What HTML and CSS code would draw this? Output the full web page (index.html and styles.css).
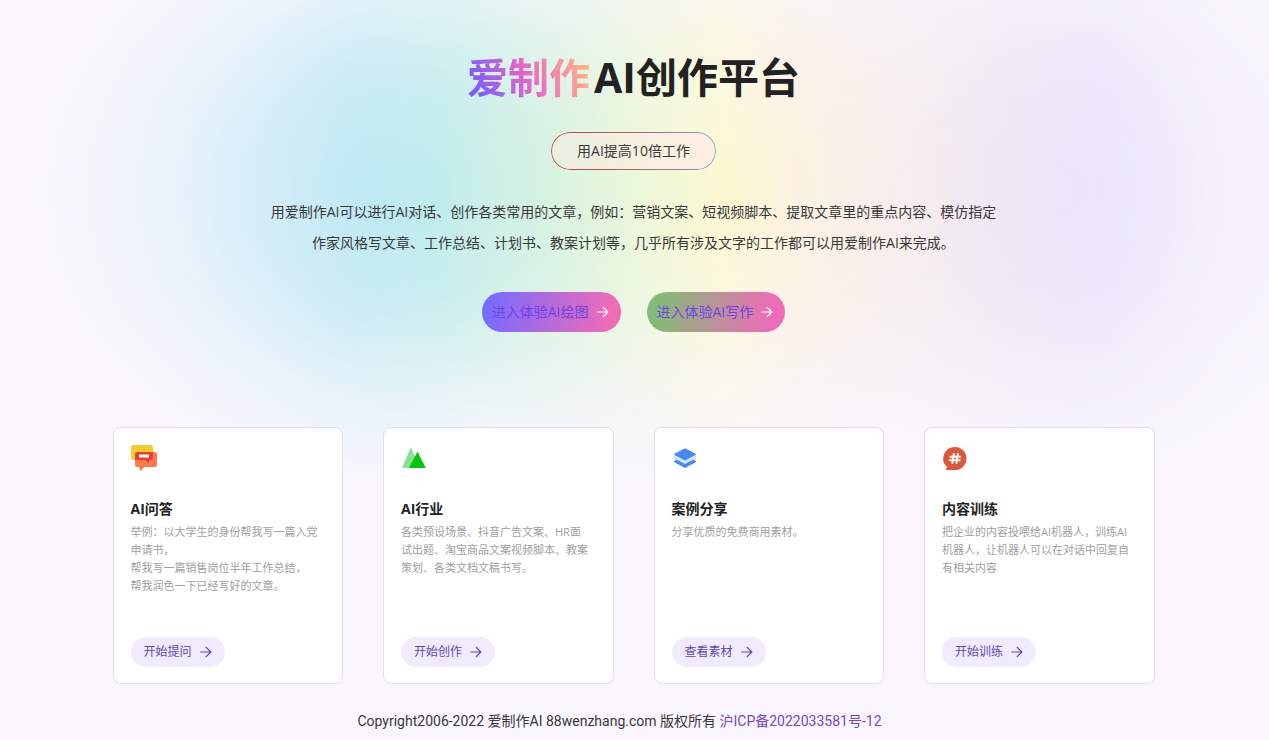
FILE: index.html
```html
<!DOCTYPE html>
<html lang="zh-CN">
<head>
<meta charset="utf-8">
<meta name="viewport" content="width=device-width, initial-scale=1">
<title>爱制作AI创作平台</title>
<link rel="stylesheet" href="styles.css">
</head>
<body>
<svg width="0" height="0" class="defs" aria-hidden="true">
  <symbol id="arrow" viewBox="0 0 12 12"><path d="M.8 6h10M6.200 1.300 10.800 6l-4.600 4.700" fill="none" stroke="currentColor" stroke-width="1.200" stroke-linecap="round" stroke-linejoin="round"/></symbol>
</svg>
<div class="page">
  <header class="hero">
    <h1 class="title"><span class="brand">爱制作</span><span>AI创作平台</span></h1>
    <p class="slogan">用AI提高10倍工作</p>
    <p class="intro">用爱制作AI可以进行AI对话、创作各类常用的文章，例如：营销文案、短视频脚本、提取文章里的重点内容、模仿指定<br>作家风格写文章、工作总结、计划书、教案计划等，几乎所有涉及文字的工作都可以用爱制作AI来完成。</p>
    <nav class="actions">
      <a class="action action-draw" href="#draw">进入体验AI绘图<svg class="arrow"><use href="#arrow"/></svg></a>
      <a class="action action-write" href="#write">进入体验AI写作<svg class="arrow"><use href="#arrow"/></svg></a>
    </nav>
  </header>

  <main class="cards">
    <section class="card">
      <svg class="icon" viewBox="0 0 28 28" aria-hidden="true">
        <rect x="0" y="1" width="22" height="15" rx="2.500" fill="#f3cb2c"/>
        <path d="M6.500 8h17A2.500 2.500 0 0 1 26 10.500v10a2.500 2.500 0 0 1-2.500 2.500H13.500L9 27.200 8.300 23H6.500A2.500 2.500 0 0 1 4 20.500v-10A2.500 2.500 0 0 1 6.500 8z" fill="#fa7a4e"/>
        <path d="M6.500 8H22v5.500a2.500 2.500 0 0 1-2.500 2.500H18v3.200L14 16H4v-5.500A2.500 2.500 0 0 1 6.500 8z" fill="#e5402f"/>
        <rect x="8" y="10.500" width="10" height="3" rx=".5" fill="#fff"/>
      </svg>
      <h2 class="card-title">AI问答</h2>
      <p class="card-text">举例：以大学生的身份帮我写一篇入党<br>申请书，<br>帮我写一篇销售岗位半年工作总结，<br>帮我润色一下已经写好的文章。</p>
      <a class="more" href="#ask">开始提问<svg class="arrow"><use href="#arrow"/></svg></a>
    </section>
    <section class="card">
      <svg class="icon" viewBox="0 0 28 28" aria-hidden="true">
        <path d="M1 24 9.800 3.200 16 17.500 13 24z" fill="#86e28e"/>
        <path d="M8 24 16.500 7.500 24.800 24z" fill="#06c60c"/>
      </svg>
      <h2 class="card-title">AI行业</h2>
      <p class="card-text">各类预设场景、抖音广告文案、HR面<br>试出题、淘宝商品文案视频脚本、教案<br>策划、各类文档文稿书写。</p>
      <a class="more" href="#create">开始创作<svg class="arrow"><use href="#arrow"/></svg></a>
    </section>
    <section class="card">
      <svg class="icon" viewBox="0 0 28 28" aria-hidden="true">
        <path d="M2 10.500v7l11 5.500 11-5.500v-7z" fill="#d6e6fd"/>
        <path d="M13 4.800 23.600 10.300 13 16 2.400 10.300z" fill="#4687f4" stroke="#4687f4" stroke-linejoin="round"/>
        <path d="M2.200 17.600 4.800 16.300 13 20.400 21.200 16.300 23.800 17.600 13 23.500z" fill="#4687f4" stroke="#4687f4" stroke-linejoin="round"/>
      </svg>
      <h2 class="card-title">案例分享</h2>
      <p class="card-text">分享优质的免费商用素材。</p>
      <a class="more" href="#cases">查看素材<svg class="arrow"><use href="#arrow"/></svg></a>
    </section>
    <section class="card">
      <svg class="icon" viewBox="0 0 28 28" aria-hidden="true">
        <path d="M13 3a11.500 11.500 0 1 1 0 23H3.500c.9-1 1.300-2 1.300-3.200A11.500 11.500 0 0 1 13 3z" fill="#db5a3c"/>
        <path d="M11.800 10 10.400 19M15.800 10l-1.400 9M8.300 12.800h9.800M7.900 16.300h9.800" fill="none" stroke="#fff" stroke-width="1.900" stroke-linecap="round"/>
      </svg>
      <h2 class="card-title">内容训练</h2>
      <p class="card-text">把企业的内容投喂给AI机器人，训练AI<br>机器人，让机器人可以在对话中回复自<br>有相关内容</p>
      <a class="more" href="#train">开始训练<svg class="arrow"><use href="#arrow"/></svg></a>
    </section>
  </main>

  <footer class="footer">Copyright2006-2022 爱制作AI 88wenzhang.com 版权所有 <a href="#icp">沪ICP备2022033581号-12</a></footer>
</div>
</body>
</html>
```
FILE: styles.css
```css
* {
  box-sizing: border-box;
}

body {
  margin: 0;
  background: #f9f7fd;
  color: #383838;
  font: 14px/20px "Open Sans", "Noto Sans CJK SC", sans-serif;
}

h1, h2, p {
  margin: 0;
}

a {
  color: #7a45c8;
  text-decoration: none;
}

.defs {
  position: absolute;
}

.page {
  position: relative;
  isolation: isolate;
  padding: 49px 22px 8px 20px;
}

/* Soft colour wash behind the hero */
.page::before {
  content: "";
  position: absolute;
  z-index: -1;
  inset: 0 0 auto;
  height: 500px;
  background: linear-gradient(90deg, #dceefb 8%, #cdebf8 20%, #bfe9f4 28%, #c0ecec 35%, #d2f2de 43%, #ecf7d6 51%, #fdf8d3 57%, #fdf0dc 63%, #f5eae9 72%, #ebe4f5 80%, #e8e2fa 87%, #efeafc 96%);
  -webkit-mask-image:
    radial-gradient(28% 290px at 31% 190px, #000 12%, #000000cc 40%, #00000050 72%, transparent),
    radial-gradient(26% 310px at 56% 190px, #000 10%, #000000a0 45%, #00000038 75%, transparent),
    radial-gradient(24% 290px at 83% 190px, #000000e6 5%, #000000bb 40%, #00000050 72%, transparent);
  mask-image:
    radial-gradient(28% 290px at 31% 190px, #000 12%, #000000cc 40%, #00000050 72%, transparent),
    radial-gradient(26% 310px at 56% 190px, #000 10%, #000000a0 45%, #00000038 75%, transparent),
    radial-gradient(24% 290px at 83% 190px, #000000e6 5%, #000000bb 40%, #00000050 72%, transparent);
}

.hero {
  display: flex;
  flex-direction: column;
  align-items: center;
  text-align: center;
}

.title {
  display: flex;
  gap: 4px;
  color: #222;
  font-size: 41px;
  line-height: 56px;
}

.brand {
  background: linear-gradient(65deg, #7b5cff 10%, #e668c4 50%, #ffb08a 90%);
  -webkit-background-clip: text;
  background-clip: text;
  color: transparent;
}

.slogan {
  position: relative;
  margin-top: 27px;
  padding: 9px 26px;
  border-radius: 20px;
  background: linear-gradient(90deg, #fdebe060, #fdebe4cc);
}

.slogan::before {
  content: "";
  position: absolute;
  inset: 0;
  padding: 1px;
  border-radius: 20px;
  background: linear-gradient(90deg, #cc4048, #b06070 50%, #7f9fd8);
  -webkit-mask: linear-gradient(#000 0 0) content-box exclude, linear-gradient(#000 0 0);
  mask: linear-gradient(#000 0 0) content-box exclude, linear-gradient(#000 0 0);
}

.intro {
  margin-top: 26px;
  line-height: 31px;
}

.actions {
  display: flex;
  gap: 26px;
  margin-top: 34px;
}

.action {
  display: flex;
  align-items: center;
  gap: 8px;
  padding: 10px;
  padding-right: 12px;
  border-radius: 20px;
  color: #7044e4;
}

.action-draw {
  background: linear-gradient(100deg, #776bff 5%, #ee6bb8 90%);
}

.action-write {
  background: linear-gradient(100deg, #85bb78 10%, #ee6bb8 90%);
}

.arrow {
  width: 12px;
  height: 12px;
}

.action .arrow {
  color: #fff;
}

.cards {
  display: grid;
  grid-template-columns: repeat(auto-fit, minmax(220px, 1fr));
  gap: 40px;
  max-width: 1042px;
  margin: 95px auto 0;
}

.card {
  display: flex;
  flex-direction: column;
  align-items: flex-start;
  min-height: 257px;
  padding: 16px 17px;
  border: 1px solid #e2dfe9;
  border-radius: 8px;
  background: #fff;
}

.icon {
  width: 28px;
  height: 28px;
}

.card-title {
  margin-top: 27px;
  color: #222;
  font-size: 14px;
  line-height: 20px;
}

.card-text {
  margin: 4px 0 16px;
  color: #a0a0a0;
  font-size: 11px;
  line-height: 18px;
  white-space: nowrap;
}

.more {
  display: flex;
  align-items: center;
  gap: 8px;
  margin-top: auto;
  padding: 5px 13px;
  border-radius: 15px;
  background: #f0ebfe;
  color: #5d48aa;
  font-size: 12px;
}

.footer {
  margin-top: 27px;
  padding-right: 28px;
  font-family: Roboto, "Noto Sans CJK SC", sans-serif;
  text-align: center;
}
```
